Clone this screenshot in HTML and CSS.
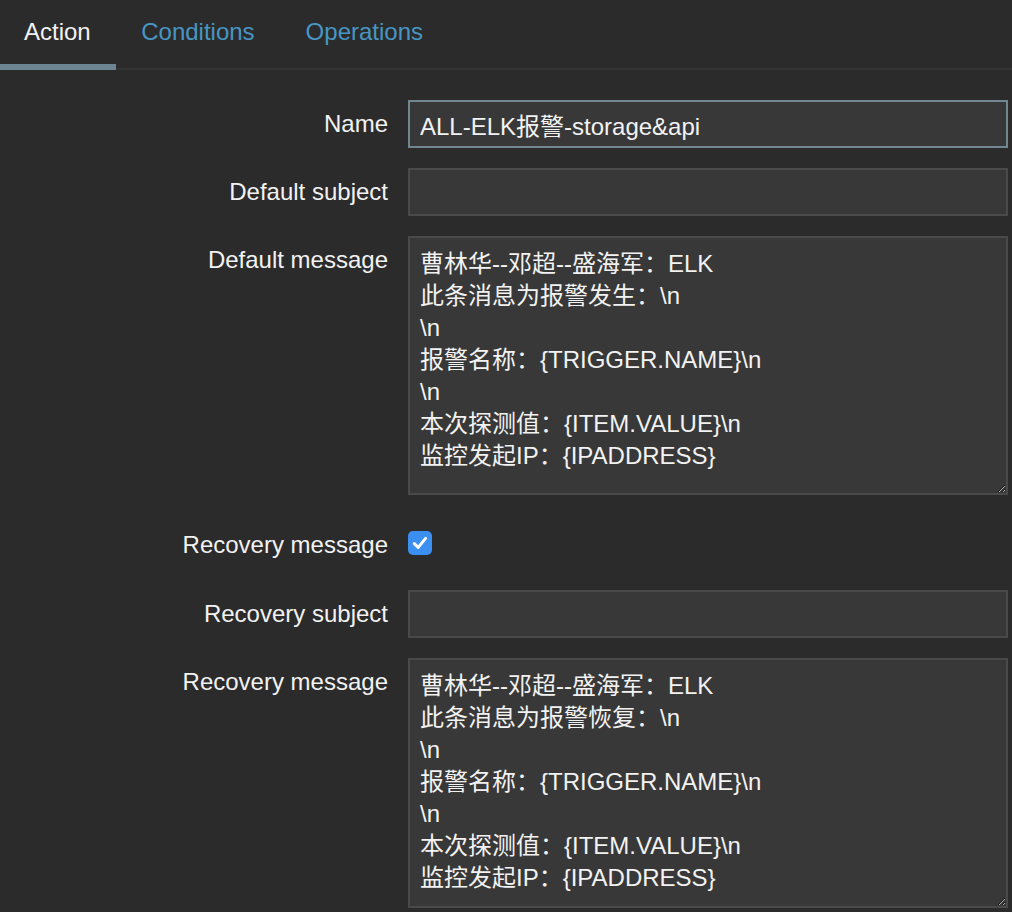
FILE: index.html
```html
<!DOCTYPE html>
<html lang="zh">
<head>
<meta charset="utf-8">
<title>Action</title>
<link rel="stylesheet" href="styles.css">
</head>
<body>
<div class="tabs">
  <a class="tab active">Action</a>
  <a class="tab">Conditions</a>
  <a class="tab">Operations</a>
</div>
<form class="form">
  <label class="label">Name</label>
  <input class="field focused" type="text" value="ALL-ELK报警-storage&amp;api">

  <label class="label">Default subject</label>
  <input class="field" type="text" value="">

  <label class="label">Default message</label>
  <textarea class="area area-default">曹林华--邓超--盛海军：ELK
此条消息为报警发生：\n
\n
报警名称：{TRIGGER.NAME}\n
\n
本次探测值：{ITEM.VALUE}\n
监控发起IP：{IPADDRESS}</textarea>

  <label class="label label-check">Recovery message</label>
  <div class="check-cell">
    <span class="checkbox"><svg width="24" height="24" viewBox="0 0 24 24"><path d="M6.3 12.6 L10.2 16.4 L17.6 7.4" fill="none" stroke="#fff" stroke-width="3" stroke-linecap="round" stroke-linejoin="round"/></svg></span>
  </div>

  <label class="label">Recovery subject</label>
  <input class="field" type="text" value="">

  <label class="label">Recovery message</label>
  <textarea class="area area-recovery">曹林华--邓超--盛海军：ELK
此条消息为报警恢复：\n
\n
报警名称：{TRIGGER.NAME}\n
\n
本次探测值：{ITEM.VALUE}\n
监控发起IP：{IPADDRESS}</textarea>
</form>
</body>
</html>
```

FILE: styles.css
```css
html, body {
  margin: 0;
  padding: 0;
  background: #2b2b2b;
  color: #f2f2f2;
  font-family: "Liberation Sans", Arial, "Noto Sans CJK SC", sans-serif;
  font-size: 24px;
}

.tabs {
  display: flex;
  height: 68px;
  border-bottom: 2px solid #333333;
}

.tab {
  display: block;
  padding: 0 25.5px;
  line-height: 64px;
  color: #4796c4;
  text-decoration: none;
  height: 64px;
  cursor: pointer;
}

.tab.active {
  color: #f2f2f2;
  padding: 0 25px 0 24px;
  border-bottom: 6px solid #6d8592;
}

.form {
  display: grid;
  grid-template-columns: 388px 600px;
  column-gap: 20px;
  row-gap: 20px;
  padding-top: 30px;
  align-items: start;
}

.label {
  text-align: right;
  line-height: 48px;
  white-space: nowrap;
}

.field {
  box-sizing: border-box;
  width: 600px;
  height: 48px;
  margin: 0;
  padding: 0 10px;
  background: #383838;
  border: 2px solid #4a4a4a;
  color: #f2f2f2;
  font-family: "Liberation Sans", Arial, "Noto Sans CJK SC", sans-serif;
  font-size: 24px;
  outline: none;
}

.field.focused {
  border-color: #72878f;
}

.area {
  box-sizing: border-box;
  width: 600px;
  margin: 0;
  padding: 10px 10px;
  background: #383838;
  border: 2px solid #4a4a4a;
  color: #f2f2f2;
  font-family: "Liberation Sans", Arial, "Noto Sans CJK SC", sans-serif;
  font-size: 24px;
  line-height: 32px;
  outline: none;
  resize: both;
  overflow: hidden;
  display: block;
}

.area-default {
  height: 259px;
}

.area-recovery {
  height: 250px;
}

.label-check {
  line-height: 28px;
  padding-top: 16px;
  min-height: 39px;
}

.check-cell {
  padding-top: 16px;
  height: 39px;
}

.checkbox {
  display: block;
  width: 24px;
  height: 24px;
  border-radius: 5px;
  background: #3a8ff0;
}

.checkbox svg {
  display: block;
}
```
